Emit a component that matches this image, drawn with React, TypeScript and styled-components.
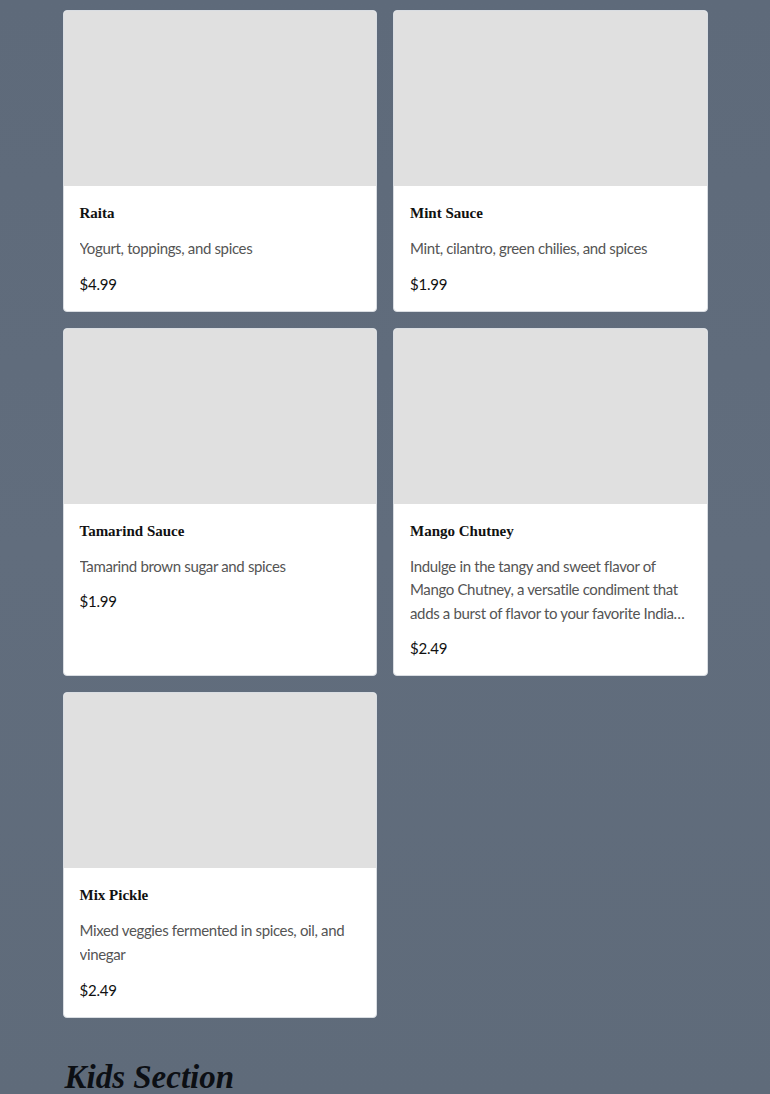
import React from 'react'
import styled, { createGlobalStyle } from 'styled-components'

const GlobalStyle = createGlobalStyle`
  * {
    box-sizing: border-box;
  }

  body {
    margin: 0;
    background-color: #5f6b7b;
    font-family: Lato, "Liberation Sans", sans-serif;
  }
`

const StyledPage = styled.div`
  min-height: 1094px;
  background: linear-gradient(180deg, #5e6a7a 0%, #616d7d 50%, #5f6b7a 100%);
  padding-top: 10px;
`

const StyledSection = styled.section`
  width: 645px;
  margin: 0 auto;
`

const StyledGrid = styled.div`
  display: grid;
  grid-template-columns: 1fr 1fr;
  gap: 16px;
`

const StyledCard = styled.div`
  display: flex;
  flex-direction: column;
  background-color: #fff;
  border: 1px solid #d9dde2;
  border-radius: 4px;
  overflow: hidden;
`

const StyledImage = styled.div`
  height: 175px;
  background-color: #e0e0e0;
`

const StyledBody = styled.div`
  padding: 17px 16px 15px;
`

const StyledTitle = styled.h3`
  margin: 0 0 14px;
  font-family: "Liberation Serif", "DejaVu Serif", serif;
  font-size: 15px;
  font-weight: bold;
  line-height: 20px;
  color: #111;
`

const StyledDescription = styled.p`
  margin: 0 0 12px;
  font-size: 15px;
  letter-spacing: -0.35px;
  line-height: 23.6px;
  color: #555;
  display: -webkit-box;
  -webkit-line-clamp: 3;
  -webkit-box-orient: vertical;
  overflow: hidden;
`

const StyledPrice = styled.div`
  font-size: 15px;
  letter-spacing: -0.2px;
  line-height: 23px;
  color: #111;
`

const StyledHeading = styled.h2`
  margin: 41px 0 0;
  padding-left: 2px;
  font-family: "Liberation Serif", "DejaVu Serif", serif;
  font-size: 33px;
  font-style: italic;
  font-weight: bold;
  color: #0c0f14;
`

const items = [
  { name: 'Raita', description: 'Yogurt, toppings, and spices', price: '$4.99' },
  { name: 'Mint Sauce', description: 'Mint, cilantro, green chilies, and spices', price: '$1.99' },
  { name: 'Tamarind Sauce', description: 'Tamarind brown sugar and spices', price: '$1.99' },
  {
    name: 'Mango Chutney',
    description:
      'Indulge in the tangy and sweet flavor of Mango Chutney, a versatile condiment that adds a burst of flavor to your favorite Indian dishes and snacks.',
    price: '$2.49',
  },
  { name: 'Mix Pickle', description: 'Mixed veggies fermented in spices, oil, and vinegar', price: '$2.49' },
]

const App = () => {
  return (
    <>
      <GlobalStyle />
      <StyledPage>
        <StyledSection>
          <StyledGrid>
            {items.map((item) => (
              <StyledCard key={item.name}>
                <StyledImage />
                <StyledBody>
                  <StyledTitle>{item.name}</StyledTitle>
                  <StyledDescription>{item.description}</StyledDescription>
                  <StyledPrice>{item.price}</StyledPrice>
                </StyledBody>
              </StyledCard>
            ))}
          </StyledGrid>
          <StyledHeading>Kids Section</StyledHeading>
        </StyledSection>
      </StyledPage>
    </>
  )
}

export default App
